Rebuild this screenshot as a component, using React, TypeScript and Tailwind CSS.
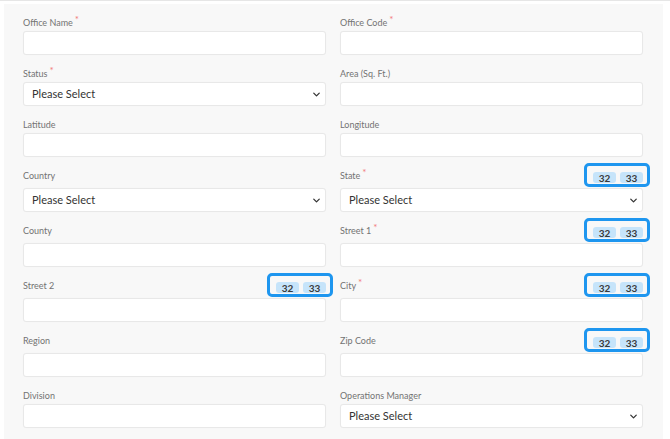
import { ChevronDown } from 'lucide-react';

type Field = {
  label: string;
  required?: boolean;
  select?: boolean;
  badges?: boolean;
};

const rows: { tall?: boolean; fields: [Field, Field] }[] = [
  { fields: [{ label: 'Office Name', required: true }, { label: 'Office Code', required: true }] },
  { fields: [{ label: 'Status', required: true, select: true }, { label: 'Area (Sq. Ft.)' }] },
  { fields: [{ label: 'Latitude' }, { label: 'Longitude' }] },
  { tall: true, fields: [{ label: 'Country', select: true }, { label: 'State', required: true, select: true, badges: true }] },
  { tall: true, fields: [{ label: 'County' }, { label: 'Street 1', required: true, badges: true }] },
  { tall: true, fields: [{ label: 'Street 2', badges: true }, { label: 'City', required: true, badges: true }] },
  { tall: true, fields: [{ label: 'Region' }, { label: 'Zip Code', badges: true }] },
  { fields: [{ label: 'Division' }, { label: 'Operations Manager', select: true }] },
];

function Badges() {
  return (
    <div className="relative flex items-center gap-[4px] mt-[5px]">
      {/* highlight frame */}
      <div className="absolute -left-[9px] -right-[7px] -top-[9px] -bottom-[4px] border-[3px] border-[#1e96ef] rounded-[5px]" />
      <span className="w-[23px] h-[11px] flex items-center justify-center rounded-[3px] bg-[#c6e4fa] text-[10px] font-bold text-[#3a3a3a] leading-none">32</span>
      <span className="w-[23px] h-[11px] flex items-center justify-center rounded-[3px] bg-[#c6e4fa] text-[10px] font-bold text-[#3a3a3a] leading-none">33</span>
    </div>
  );
}

function FormField({ field, tall }: { field: Field; tall?: boolean }) {
  return (
    <div className="flex flex-col">
      <div className={`h-[12px] flex items-center justify-between ${tall ? 'mb-[7px]' : 'mb-[3px]'}`}>
        <span className="text-[9px] text-[#737373] leading-none">
          {field.label}
          {field.required && <span className="text-[#f27b7b] text-[10px] relative -top-[3px] ml-[2px]">*</span>}
        </span>
        {field.badges && <Badges />}
      </div>
      <div className="h-[24px] bg-white border border-[#e8e8e8] rounded-[3px] shadow-[0_0_1px_rgba(0,0,0,0.04)] flex items-center justify-between pl-[8px] pr-[3px]">
        {field.select && (
          <>
            <span className="text-[11px] text-[#333]">Please Select</span>
            <ChevronDown size={11} strokeWidth={2.75} className="text-[#333]" />
          </>
        )}
      </div>
    </div>
  );
}

export default function App() {
  return (
    <div className="w-[670px] h-[439px] bg-white border-t border-[#e6e6e6] pt-[3px] pl-[4px] pr-[7px] overflow-hidden" style={{ fontFamily: 'Lato, "Open Sans", sans-serif' }}>
      <div className="h-full bg-[#f8f8f8] pt-[12px] pl-[19px] pr-[20px] flex flex-col gap-[12px]">
        {rows.map((row, i) => (
          <div key={i} className="grid grid-cols-2 gap-x-[14px]">
            <FormField field={row.fields[0]} tall={row.tall} />
            <FormField field={row.fields[1]} tall={row.tall} />
          </div>
        ))}
      </div>
    </div>
  );
}
